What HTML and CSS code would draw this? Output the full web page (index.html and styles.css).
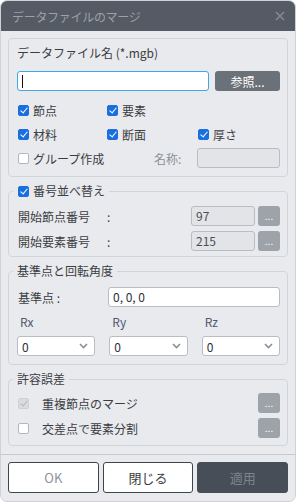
FILE: index.html
```html
<!DOCTYPE html>
<html lang="ja">
<head>
    <meta charset="UTF-8">
    <meta name="viewport" content="width=device-width, initial-scale=1.0">
    <title>データファイルのマージ</title>
    <link rel="stylesheet" href="styles.css">
</head>
<body>
    <div class="dialog">
        <div class="titlebar">
            <span class="title">データファイルのマージ</span>
            <svg class="close" width="10" height="10" viewBox="0 0 10 10">
                <path d="M1 1L9 9M9 1L1 9" stroke="#8b9198" stroke-width="1.1" fill="none"/>
            </svg>
        </div>

        <div class="content">
            <!-- file to merge -->
            <div class="group group-file">
                <div class="label">データファイル名 (*.mgb)</div>
                <div class="file-row">
                    <div class="input input-file"><span class="caret"></span></div>
                    <button class="btn-browse">参照...</button>
                </div>
                <div class="check-grid">
                    <label class="check"><span class="box on"></span>節点</label>
                    <label class="check"><span class="box on"></span>要素</label>
                    <span></span>
                    <label class="check"><span class="box on"></span>材料</label>
                    <label class="check"><span class="box on"></span>断面</label>
                    <label class="check"><span class="box on"></span>厚さ</label>
                </div>
                <div class="group-row">
                    <label class="check"><span class="box"></span>グループ作成</label>
                    <span class="name-label">名称:</span>
                    <div class="input input-disabled input-name"></div>
                </div>
            </div>

            <!-- renumber -->
            <fieldset class="group group-renumber">
                <legend><label class="check check-legend"><span class="box on"></span>番号並べ替え</label></legend>
                <div class="num-row">
                    <span class="num-label">開始節点番号</span>
                    <span class="colon">:</span>
                    <div class="input input-disabled input-num">97</div>
                    <button class="btn-dots">...</button>
                </div>
                <div class="num-row">
                    <span class="num-label">開始要素番号</span>
                    <span class="colon">:</span>
                    <div class="input input-disabled input-num">215</div>
                    <button class="btn-dots">...</button>
                </div>
            </fieldset>

            <!-- base point and rotation -->
            <fieldset class="group group-rotate">
                <legend>基準点と回転角度</legend>
                <div class="base-row">
                    <span class="base-label">基準点 :</span>
                    <div class="input input-base">0, 0, 0</div>
                </div>
                <div class="axis-grid">
                    <span class="axis-label">Rx</span>
                    <span class="axis-label">Ry</span>
                    <span class="axis-label">Rz</span>
                    <div class="select">0<svg width="9" height="6" viewBox="0 0 9 6"><path d="M1 1L4.5 4.5L8 1" stroke="#8a8f96" stroke-width="1.6" fill="none"/></svg></div>
                    <div class="select">0<svg width="9" height="6" viewBox="0 0 9 6"><path d="M1 1L4.5 4.5L8 1" stroke="#8a8f96" stroke-width="1.6" fill="none"/></svg></div>
                    <div class="select">0<svg width="9" height="6" viewBox="0 0 9 6"><path d="M1 1L4.5 4.5L8 1" stroke="#8a8f96" stroke-width="1.6" fill="none"/></svg></div>
                </div>
            </fieldset>

            <!-- tolerance -->
            <fieldset class="group group-tol">
                <legend>許容誤差</legend>
                <div class="tol-row">
                    <label class="check check-wide"><span class="box dis"></span>重複節点のマージ</label>
                    <button class="btn-dots">...</button>
                </div>
                <div class="tol-row">
                    <label class="check check-wide"><span class="box"></span>交差点で要素分割</label>
                    <button class="btn-dots">...</button>
                </div>
            </fieldset>
        </div>

        <div class="footer">
            <button class="btn btn-ok">OK</button>
            <button class="btn">閉じる</button>
            <button class="btn btn-apply">適用</button>
        </div>
    </div>
</body>
</html>
```

FILE: styles.css
```css
* {
    box-sizing: border-box;
}

body {
    margin: 0;
    background-color: #ffffff;
    font-family: "Noto Sans CJK JP", "Noto Sans", sans-serif;
    font-size: 12px;
    color: #3a3d42;
}

.dialog {
    width: 296px;
    height: 502px;
    background-color: #e9eaee;
    border: 1px solid #cfd1d6;
    border-radius: 7px;
    overflow: hidden;
}

.titlebar {
    height: 30px;
    background-color: #545b64;
    display: flex;
    align-items: center;
    justify-content: space-between;
    padding: 0 10px 0 11px;
}

.title {
    color: #9ca1a8;
    font-size: 12px;
    letter-spacing: -0.3px;
}

.content {
    padding: 7px 7px 0 7px;
}

.group {
    margin: 0;
    border: 1px solid #d2d4d9;
    border-radius: 4px;
    padding: 0 7px 0 8px;
    min-width: 0;
}

fieldset.group {
    margin-top: 6px;
}

legend {
    padding: 0 4px;
    margin-left: -4px;
    height: 16px;
    line-height: 16px;
    color: #3a3d42;
}

.label {
    line-height: 16px;
}

.group-file {
    padding-top: 6px;
    padding-bottom: 8px;
}

.file-row {
    display: flex;
    gap: 6px;
    margin-top: 10px;
}

.input {
    height: 20px;
    background-color: #ffffff;
    border: 1px solid #b9bcc2;
    border-radius: 3px;
    padding: 0 4px;
    line-height: 18px;
    font-size: 12px;
    color: #2d3035;
}

.input-file {
    flex: 1;
    border-color: #41a6e6;
}

.caret {
    display: inline-block;
    width: 1px;
    height: 13px;
    background-color: #111;
    vertical-align: middle;
    margin-top: -2px;
}

.input-disabled {
    background-color: #e2e4e8;
    color: #4a4e55;
}

button {
    font-family: inherit;
    border: none;
    padding: 0;
    cursor: pointer;
}

.btn-browse {
    width: 65px;
    height: 20px;
    border-radius: 3px;
    background-color: #6b7178;
    color: #ffffff;
    font-size: 12px;
}

.check {
    display: flex;
    align-items: center;
    height: 20px;
    gap: 4px;
    white-space: nowrap;
}

.check-legend {
    height: 16px;
}

.box {
    width: 11px;
    height: 11px;
    margin-left: 1px;
    border: 1px solid #b3b6bc;
    border-radius: 2px;
    background-color: #ffffff;
    position: relative;
    flex: none;
}

.box.on {
    background-color: #1a6fdf;
    border-color: #1a6fdf;
}

.box.dis {
    background-color: #d9dbdf;
    border-color: #cdd0d4;
}

.box.on::after,
.box.dis::after {
    content: "";
    position: absolute;
    left: 3px;
    top: 0px;
    width: 3px;
    height: 6px;
    border-right: 1.6px solid #ffffff;
    border-bottom: 1.6px solid #ffffff;
    transform: rotate(40deg);
}

.box.dis::after {
    border-color: #b5b8bd;
}

.check-grid {
    display: grid;
    grid-template-columns: 89px 91px auto;
    row-gap: 4px;
    margin-top: 9px;
}

.group-row {
    display: flex;
    align-items: center;
    margin-top: 4px;
}

.group-row .check {
    width: 137px;
}

.name-label {
    width: 43px;
    color: #8c9096;
}

.input-name {
    flex: 1;
    height: 20px;
}

.group-renumber {
    padding-top: 7px;
    padding-bottom: 5px;
}

.num-row {
    display: flex;
    align-items: center;
    height: 20px;
}

.num-row + .num-row {
    margin-top: 5px;
}

.num-label {
    width: 90px;
    padding-left: 1px;
}

.colon {
    flex: 1;
}

.input-num {
    width: 64px;
}

.btn-dots {
    width: 22px;
    height: 20px;
    margin-left: 3px;
    border-radius: 3px;
    background-color: #9ea3a9;
    color: #ffffff;
    font-size: 10px;
    line-height: 14px;
}

.group-rotate {
    padding-top: 8px;
    padding-bottom: 8px;
}

.base-row {
    display: flex;
    align-items: center;
}

.base-label {
    width: 91px;
    padding-left: 1px;
}

.input-base {
    flex: 1;
}

.axis-grid {
    display: grid;
    grid-template-columns: repeat(3, 1fr);
    column-gap: 14px;
    margin-top: 7px;
}

.axis-label {
    line-height: 16px;
    padding-left: 3px;
    color: #4e5870;
    margin-bottom: 6px;
}

.select {
    height: 20px;
    background-color: #ffffff;
    border: 1px solid #b9bcc2;
    border-radius: 3px;
    padding: 0 6px 0 4px;
    display: flex;
    align-items: center;
    justify-content: space-between;
    color: #2d3035;
}

.group-tol {
    padding-top: 6px;
    padding-bottom: 7px;
}

.tol-row {
    display: flex;
    align-items: center;
    justify-content: space-between;
}

.tol-row + .tol-row {
    margin-top: 5px;
}

.check-wide {
    gap: 13px;
}

.footer {
    margin-top: 8px;
    border-top: 1px solid #c8cacf;
    padding: 7px 7px 0 7px;
    display: flex;
    gap: 4px;
}

.btn {
    flex: 1;
    height: 31px;
    border: 1px solid #3e444c;
    border-radius: 3px;
    background-color: #ffffff;
    color: #3a3d42;
    font-size: 13px;
}

.btn-ok {
    color: #8d939a;
}

.btn-apply {
    background-color: #474e57;
    border-color: #474e57;
    color: #7c838b;
}
```
